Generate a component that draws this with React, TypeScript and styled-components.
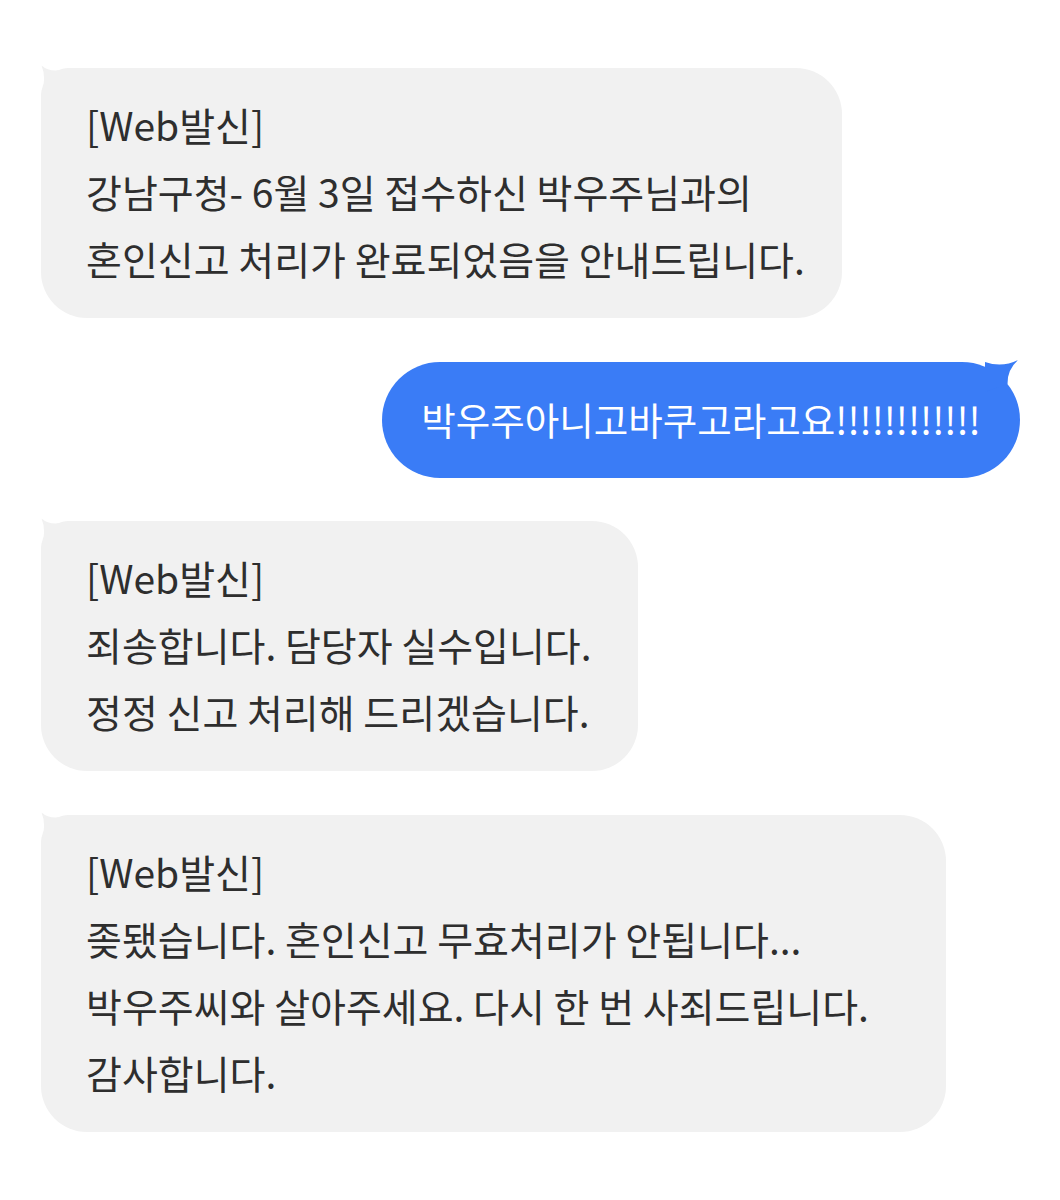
import styled, { createGlobalStyle } from 'styled-components';

type Side = 'in' | 'out';

interface Message {
  side: Side;
  width: number;
  lines: string[];
}

const messages: Message[] = [
  {
    side: 'in',
    width: 801,
    lines: ['[Web발신]', '강남구청- 6월 3일 접수하신 박우주님과의', '혼인신고 처리가 완료되었음을 안내드립니다.'],
  },
  { side: 'out', width: 638, lines: ['박우주아니고바쿠고라고요!!!!!!!!!!!!'] },
  {
    side: 'in',
    width: 597,
    lines: ['[Web발신]', '죄송합니다. 담당자 실수입니다.', '정정 신고 처리해 드리겠습니다.'],
  },
  {
    side: 'in',
    width: 905,
    lines: [
      '[Web발신]',
      '좆됐습니다. 혼인신고 무효처리가 안됩니다...',
      '박우주씨와 살아주세요. 다시 한 번 사죄드립니다.',
      '감사합니다.',
    ],
  },
];

// little horn on the bubble corner
const Tail = ({ side }: { side: Side }) =>
  side === 'in' ? (
    <TailSvg $side={side} width="40" height="40" viewBox="0 0 40 40">
      <path d="M0.5 -2.5 Q10 6 28 0 L32 0 L32 32 L0 32 L0 28 Q6 10 0.5 -2.5 Z" />
    </TailSvg>
  ) : (
    <TailSvg $side={side} width="40" height="40" viewBox="0 0 40 40">
      <path d="M38 -2 Q22 6 5 0 L5 30 L27.5 22 Q27 8 38 -2 Z" />
    </TailSvg>
  );

export default function App() {
  return (
    <>
      <GlobalStyle />
      <Thread>
        {messages.map((m, i) => (
          <Row key={i} $side={m.side}>
            <Bubble $side={m.side} $width={m.width}>
              <Tail side={m.side} />
              {m.lines.map((line, j) => (
                <Line key={j}>{line}</Line>
              ))}
            </Bubble>
          </Row>
        ))}
      </Thread>
    </>
  );
}

const GlobalStyle = createGlobalStyle`
  body {
    margin: 0;
    background: #fff;
    font-family: 'Noto Sans CJK KR', 'Noto Sans', sans-serif;
  }
`;

const Thread = styled.div`
  width: 1060px;
  height: 1200px;
  box-sizing: border-box;
  padding: 68px 40px 0 41px;
  display: flex;
  flex-direction: column;
  gap: 43.5px;
`;

const Row = styled.div<{ $side: Side }>`
  display: flex;
  justify-content: ${({ $side }) => ($side === 'in' ? 'flex-start' : 'flex-end')};
`;

const Bubble = styled.div<{ $side: Side; $width: number }>`
  position: relative;
  box-sizing: border-box;
  width: ${({ $width }) => $width}px;
  padding: ${({ $side }) => ($side === 'in' ? '23px 40px 26px 45px' : '23px 20px 26px')};
  border-radius: ${({ $side }) => ($side === 'in' ? '28px 46px 46px 46px' : '58px')};
  background: ${({ $side }) => ($side === 'in' ? '#f1f1f1' : '#3a7cf6')};
  color: ${({ $side }) => ($side === 'in' ? '#2e2e2e' : '#ffffff')};
  font-size: ${({ $side }) => ($side === 'in' ? '39px' : '37.5px')};
  line-height: 67px;
  text-align: ${({ $side }) => ($side === 'in' ? 'left' : 'center')};
  white-space: nowrap;
`;

const TailSvg = styled.svg<{ $side: Side }>`
  position: absolute;
  top: 0;
  ${({ $side }) => ($side === 'in' ? 'left: 0;' : 'right: 0;')}
  overflow: visible;
  fill: ${({ $side }) => ($side === 'in' ? '#f1f1f1' : '#3a7cf6')};
`;

const Line = styled.div`
  position: relative;
`;
